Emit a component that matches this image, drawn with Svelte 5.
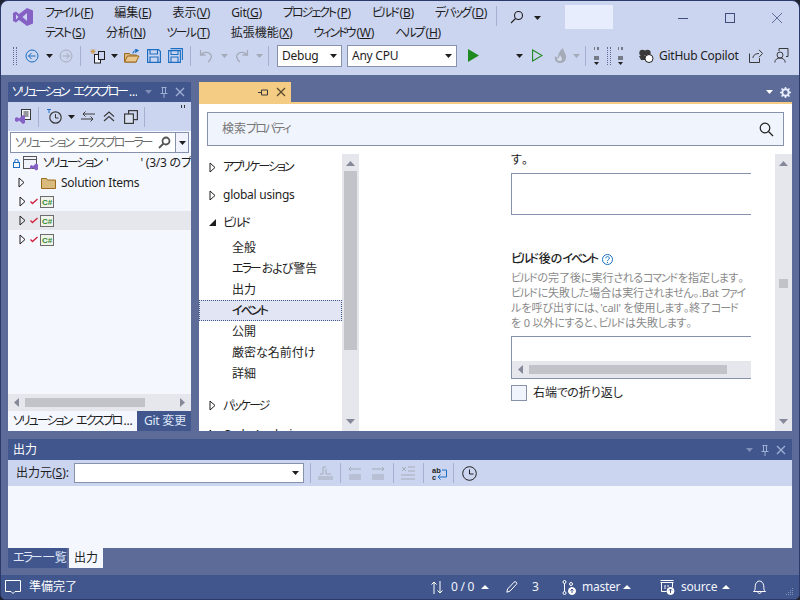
<script>
  const menu1 = [['ファイル','F'],['編集','E'],['表示','V'],['Git','G'],['プロジェクト','P'],['ビルド','B'],['デバッグ','D']];
  const menu2 = [['テスト','S'],['分析','N'],['ツール','T'],['拡張機能','X'],['ウィンドウ','W'],['ヘルプ','H']];
  const nav = [
    { t:'アプリケーション', c:'group closed' },
    { t:'global usings', c:'group closed' },
    { t:'ビルド', c:'group open' },
    { t:'全般', c:'sub' },
    { t:'エラーおよび警告', c:'sub' },
    { t:'出力', c:'sub' },
    { t:'イベント', c:'sub selected' },
    { t:'公開', c:'sub' },
    { t:'厳密な名前付け', c:'sub' },
    { t:'詳細', c:'sub' },
    { t:'パッケージ', c:'group closed gap' },
    { t:'Code Analysis', c:'group closed' }
  ];
  function segs(text) {
    return text.split(/([\u30A0-\u30FF]+|[\u3040-\u309F]+|[\x20-\x7E]+)/).filter(Boolean).map((t) => {
      const code = t.charCodeAt(0);
      let c = 'o';
      if (code >= 0x30A0 && code <= 0x30FF) c = 'k';
      else if (code >= 0x3040 && code <= 0x309F) c = 'h';
      else if (code < 0x7F) c = 'l';
      return { t, c };
    });
  }
</script>

{#snippet jp(text)}{#each segs(text) as s}<span class={s.c}>{s.t}</span>{/each}{/snippet}
{#snippet pin(c)}
  <svg class="glyph" width="10" height="12" viewBox="0 0 10 12" fill="none" stroke={c}><path d="M2.5 1.5h5M3.5 1.5v5.5M6.5 1.5v5.5M1.5 7.5h7M5 8v4"/></svg>
{/snippet}
{#snippet close(c)}
  <svg class="glyph" width="10" height="10" viewBox="0 0 10 10" fill="none" stroke={c} stroke-width="1.3"><path d="M1 1l8 8M9 1l-8 8"/></svg>
{/snippet}
{#snippet caret(c)}
  <svg class="glyph" width="7" height="4" viewBox="0 0 7 4"><path d="M0 0h7L3.5 4z" fill={c}/></svg>
{/snippet}
{#snippet upcaret()}
  <svg class="st-up" width="8" height="4" viewBox="0 0 8 4"><path d="M0 4h8L4 0z" fill="#fff"/></svg>
{/snippet}
{#snippet expander()}
  <svg class="glyph" width="7" height="11" viewBox="0 0 7 11" fill="none" stroke="#1e1e1e"><path d="M1 1l5 4.5-5 4.5z"/></svg>
{/snippet}
{#snippet cs()}
  <svg class="glyph" width="14" height="12" viewBox="0 0 14 12"><rect x=".5" y=".5" width="13" height="11" fill="#f0f3ea" stroke="#6d6d6d"/><text x="2" y="9" font-size="8" font-weight="700" fill="#2d8a2d" font-family="Liberation Sans, sans-serif">C#</text></svg>
{/snippet}
{#snippet check()}
  <svg class="glyph" width="8" height="7" viewBox="0 0 8 7" fill="none" stroke="#d0243c" stroke-width="1.4"><path d="M.5 3.500l2 2 5-4.500"/></svg>
{/snippet}

<div class="window">
  <header class="chrome">
    <div class="titlebar">
      <svg class="logo" width="20" height="18" viewBox="0 0 20 18"><path d="M0 5l3-1.500 3 2.500L14 0l6 2.500v13L14 18l-8-6-3 2.500L0 13zM3 6.500v5L5.500 9zM14 5l-4.500 4 4.500 4z" fill="#8661c5" fill-rule="evenodd"/></svg>
      <nav class="menus">
        <div class="menurow">
          {#each menu1 as m}<span>{@render jp(m[0])}<span class="l">(<u>{m[1]}</u>)</span></span>{/each}
        </div>
        <div class="menurow">
          {#each menu2 as m}<span>{@render jp(m[0])}<span class="l">(<u>{m[1]}</u>)</span></span>{/each}
        </div>
      </nav>
      <div class="titlesep"></div>
      <svg class="searchicon" width="14" height="14" viewBox="0 0 14 14" fill="none" stroke="#1e1e1e" stroke-width="1.1"><circle cx="8.500" cy="5.500" r="4"/><path d="M5.500 8.500L1 13"/></svg>
      <span class="searchcaret">{@render caret('#1e1e1e')}</span>
      <div class="titlebox"></div>
      <div class="winbtns">
        <svg width="12" height="12" viewBox="0 0 12 12"><path d="M1 6.500h10" stroke="#3f4f7a"/></svg>
        <svg width="12" height="12" viewBox="0 0 12 12" fill="none"><rect x="1.500" y="1.500" width="9" height="9" stroke="#3f4f7a"/></svg>
        <svg width="12" height="12" viewBox="0 0 12 12" fill="none" stroke="#5d6b99"><path d="M1 1l10 10M11 1L1 11"/></svg>
      </div>
    </div>
    <div class="toolbar">
      <div class="gripper"></div>
      <svg class="t-back" width="14" height="14" viewBox="0 0 14 14" fill="none" stroke="#1b6ec2"><circle cx="7" cy="7" r="6"/><path d="M10.500 7h-7M6.500 4l-3 3 3 3"/></svg>
      <span class="t-c1">{@render caret('#1e1e1e')}</span>
      <svg class="t-fwd" width="14" height="14" viewBox="0 0 14 14" fill="none" stroke="#a5aab8"><circle cx="7" cy="7" r="6"/><path d="M3.500 7h7M7.500 4l3 3-3 3"/></svg>
      <div class="sep s1"></div>
      <svg class="t-new" width="16" height="16" viewBox="0 0 16 16" fill="none"><path d="M3 1v5M.5 3.500h5M1 1.500l4 4M5 1.500l-4 4" stroke="#c9974c"/><rect x="4.500" y="6.500" width="6" height="8.500" stroke="#1e1e1e" fill="#f0f3fa"/><rect x="8.500" y="3.500" width="6" height="8" stroke="#1e1e1e" fill="#ccd5f0"/></svg>
      <span class="t-c2">{@render caret('#1e1e1e')}</span>
      <svg class="t-open" width="16" height="14" viewBox="0 0 16 14"><path d="M.5 4.500h5l1 1.500h6v7H.5z" fill="#dcb67a" stroke="#9a6a1f"/><path d="M.5 13l3-6h11.500l-3 6z" fill="#e8c68e" stroke="#9a6a1f"/><path d="M9 4.500c0-2 2-3 4-3M11 0l3 1.500-3 2" fill="none" stroke="#1b6ec2" stroke-width="1.200"/></svg>
      <svg class="t-save" width="14" height="14" viewBox="0 0 14 14" fill="none" stroke="#1b6ec2" stroke-width="1.200"><path d="M.6.6h11l1.800 1.800v11H.6z"/><path d="M3 1v4h7.500V1M3 13.400V8h8v5.400"/></svg>
      <svg class="t-saveall" width="15" height="15" viewBox="0 0 15 15" fill="none" stroke="#1b6ec2" stroke-width="1.100"><path d="M2.500.6h11.900v11.500M.6 2.600h11.800v11.800H.6z"/><path d="M3 3v3.500h7V3M3 14V9h7v5"/></svg>
      <div class="sep s2"></div>
      <svg class="t-undo" width="14" height="14" viewBox="0 0 14 14" fill="none" stroke="#a5aab8" stroke-width="1.300"><path d="M1.500 1v5h5M1.500 6C4 2.500 10 2.500 12 6c1 2.500-.5 5-3 7"/></svg>
      <span class="t-c3">{@render caret('#a5aab8')}</span>
      <svg class="t-redo" width="14" height="14" viewBox="0 0 14 14" fill="none" stroke="#a5aab8" stroke-width="1.300"><path d="M12.500 1v5h-5M12.500 6C10 2.500 4 2.500 2 6c-1 2.500.5 5 3 7"/></svg>
      <span class="t-c4">{@render caret('#a5aab8')}</span>
      <div class="sep s3"></div>
      <div class="combo debug"><span class="l">Debug</span>{@render caret('#1e1e1e')}</div>
      <div class="combo cpu"><span class="l">Any CPU</span>{@render caret('#1e1e1e')}</div>
      <svg class="t-play" width="11" height="13" viewBox="0 0 11 13"><path d="M0 0l11 6.500L0 13z" fill="#1f8a1f"/></svg>
      <span class="t-c5">{@render caret('#1e1e1e')}</span>
      <svg class="t-play2" width="11" height="13" viewBox="0 0 11 13" fill="none" stroke="#1f8a1f" stroke-width="1.100"><path d="M.6 1l9.500 5.500L.6 12z"/></svg>
      <svg class="t-flame" width="14" height="16" viewBox="0 0 14 16"><path d="M9 0C9 3 12 5 12 9c0 4-3 6-6 6S0 13 1 8c1 1 2 2 3 1C4 6 6 2 9 0z" fill="#a5aab8"/><path d="M6 13c-2 0-3-1-3-3 1 1 2 0 3-3 1 2 2 3 2 4s-1 2-2 2z" fill="#d6dbeb"/></svg>
      <span class="t-c6">{@render caret('#a5aab8')}</span>
      <div class="sep s4"></div>
      <svg class="t-step" width="5" height="18" viewBox="0 0 5 18"><path d="M0 0v3M4 0v3M0 10h5M0 12h5" stroke="#1e1e1e" fill="none"/><path d="M0 15h5l-2.500 3z" fill="#1e1e1e"/></svg>
      <div class="gripper g2"></div>
      <svg class="t-step2" width="5" height="18" viewBox="0 0 5 18"><path d="M0 0v3M4 0v3M0 10h5M0 12h5" stroke="#1e1e1e" fill="none"/><path d="M0 15h5l-2.500 3z" fill="#1e1e1e"/></svg>
      <svg class="t-copilot" width="16" height="14" viewBox="0 0 16 14"><circle cx="4.500" cy="4" r="3.200" fill="#3a3a3a"/><circle cx="9.500" cy="4" r="3.200" fill="#3a3a3a"/><path d="M1 7h11v4H3z" fill="#3a3a3a"/><circle cx="11" cy="9.500" r="4" fill="#fff" stroke="#1e1e1e"/></svg>
      <span class="copilot l">GitHub Copilot</span>
      <svg class="t-share" width="14" height="14" viewBox="0 0 14 14" fill="none" stroke="#3a3a3a"><path d="M.5 4.500v9h10V9M4 9c0-3 3-4.500 6-4.500M10 .8l3.500 3.700-3.500 3.700"/></svg>
      <svg class="t-fb" width="15" height="15" viewBox="0 0 15 15" fill="none" stroke="#3a3a3a"><path d="M5 3V.5h9v8h-2"/><circle cx="6" cy="7" r="3"/><path d="M.8 14.500c0-6 10.400-6 10.400 0"/></svg>
    </div>
  </header>

  <main class="workspace">
    <div class="upper">
      <aside class="explorer">
        <div class="panelhead">
          <span class="panelname">{@render jp('ソリューション エクスプロー...')}</span>
          <span class="hb">{@render caret('#7f8fb8')}</span>
          <span class="hb">{@render pin('#9fb0d6')}</span>
          <span class="hb">{@render close('#9fb0d6')}</span>
        </div>
        <div class="extools">
          <svg class="e-vs" width="16" height="15" viewBox="0 0 16 15"><rect x="6.500" y=".5" width="9" height="10" fill="#f0f3fa" stroke="#3a3a3a"/><path d="M8.500 3h5M8.500 5h5M8.500 7h5" stroke="#3a3a3a"/><path d="M0 9l2-1 2 1.500L8 6l2 1v7l-2 1-4-3.500L2 13l-2-1z" fill="#8661c5"/></svg>
          <div class="sep e1"></div>
          <svg class="e-clock" width="15" height="15" viewBox="0 0 15 15" fill="none"><path d="M0 0h4v1H2.500v3H1.500V1H0z" fill="#1b6ec2"/><circle cx="8.500" cy="8.500" r="5.700" stroke="#3a3a3a" stroke-width="1.200"/><path d="M8.500 5v4h3" stroke="#3a3a3a"/></svg>
          <span class="e-c">{@render caret('#1e1e1e')}</span>
          <svg class="e-sync" width="14" height="11" viewBox="0 0 14 11" fill="none" stroke="#3a3a3a"><path d="M14 3H2M4.500.5L2 3l2.500 2.500M0 8h12M9.500 5.500L12 8l-2.500 2.500"/></svg>
          <svg class="e-coll" width="12" height="11" viewBox="0 0 12 11" fill="none" stroke="#3a3a3a" stroke-width="1.100"><path d="M1 5.500L6 1l5 4.500M1 10l5-4.500L11 10"/></svg>
          <svg class="e-copy" width="14" height="14" viewBox="0 0 14 14" fill="none" stroke="#3a3a3a" stroke-width="1.200"><rect x="4.600" y=".6" width="8.800" height="9"/><rect x=".6" y="4" width="8.800" height="9.400" fill="#d8dfee"/></svg>
          <div class="sep e2"></div>
          <span class="overflowdots"><i></i><i></i></span>
        </div>
        <div class="exsearch">
          <span class="exsearchtext">{@render jp('ソリューション エクスプローラー (')}</span>
          <svg class="glyph" width="13" height="13" viewBox="0 0 13 13" fill="none" stroke="#555" stroke-width="1.800"><circle cx="8" cy="5" r="3.500"/><path d="M5.500 7.500L1 12"/></svg>
          <span class="exdrop">{@render caret('#1e1e1e')}</span>
        </div>
        <div class="tree">
          <div class="row root">
            <svg class="lock" width="7" height="9" viewBox="0 0 7 9" fill="none" stroke="#1b6ec2"><rect x=".5" y="3.500" width="6" height="5"/><path d="M1.800 3.500V2a1.700 1.700 0 0 1 3.400 0v1.500"/></svg>
            <svg class="glyph" width="17" height="15" viewBox="0 0 17 15"><rect x=".5" y=".5" width="13" height="12" fill="#f0f3fa" stroke="#555"/><path d="M1 3.500h12" stroke="#555"/><path d="M7 10l1.500-1 1.500 1 3-2.500 2 1v5l-2 1-3-2.500-1.500 1L7 13z" fill="#8661c5"/></svg>
            <span class="rootname">{@render jp("ソリューション '")}<span class="blank"></span>{@render jp("' (3/3 のプ")}</span>
          </div>
          <div class="row items"><span class="exp">{@render expander()}</span>
            <svg class="folder" width="15" height="12" viewBox="0 0 15 12"><path d="M.5 1.500h5l1 1.500h8v8.500H.5z" fill="#d9bb7d" stroke="#9a6a1f"/></svg>
            <span class="label l">Solution Items</span></div>
          <div class="row proj"><span class="exp">{@render expander()}</span>{@render check()}{@render cs()}</div>
          <div class="row proj hl"><span class="exp">{@render expander()}</span>{@render check()}{@render cs()}</div>
          <div class="row proj"><span class="exp">{@render expander()}</span>{@render check()}{@render cs()}</div>
        </div>
        <div class="hscroll">
          <svg width="5" height="9" viewBox="0 0 5 9"><path d="M5 0v9L0 4.500z" fill="#868999"/></svg>
          <div class="hthumb ex"></div>
          <svg width="5" height="9" viewBox="0 0 5 9"><path d="M0 0v9l5-4.500z" fill="#868999"/></svg>
        </div>
        <div class="extabs">
          <div class="tab on"><span>{@render jp('ソリューション エクスプロ...')}</span></div>
          <div class="tab off"><span>{@render jp('Git ')}変更</span></div>
        </div>
      </aside>

      <section class="document">
        <div class="docstrip">
          <div class="doctab">
            <svg class="pinh" width="10" height="9" viewBox="0 0 10 9" fill="none" stroke="#3a3a3a"><path d="M0 4.500h3M3.500 2v5h6M3.500 2h6v5" /></svg>
            {@render close('#5a4a2a')}
          </div>
          <div class="stripright">
            {@render caret('#ffffff')}
            <svg class="glyph" width="11" height="11" viewBox="0 0 11 11"><circle cx="5.500" cy="5.500" r="3.200" fill="none" stroke="#e8edfb" stroke-width="2"/><path d="M5.500 0v2M5.500 9v2M0 5.500h2M9 5.500h2M1.500 1.500l1.400 1.400M8.100 8.100l1.400 1.400M1.500 9.500l1.400-1.400M8.100 2.900l1.400-1.400" stroke="#e8edfb" stroke-width="1.500"/></svg>
          </div>
        </div>
        <div class="docbar"></div>
        <div class="docbody">
          <div class="propsearch">
            <span>{@render jp('検索プロパティ')}</span>
            <svg class="glyph" width="15" height="15" viewBox="0 0 15 15" fill="none" stroke="#1e1e1e" stroke-width="1.200"><circle cx="6" cy="6" r="4.800"/><path d="M9.500 9.500L14 14"/></svg>
          </div>
          <div class="propbody">
            <ul class="navlist">
              {#each nav as n}
                <li class={n.c}>
                  {#if n.c.includes('closed')}<span class="navexp">{@render expander()}</span>{/if}
                  {#if n.c.includes('open')}<svg class="navopen" width="7" height="7" viewBox="0 0 7 7"><path d="M7 0v7H0z" fill="#1e1e1e"/></svg>{/if}
                  <span class="label">{@render jp(n.t)}</span>
                </li>
              {/each}
            </ul>
            <div class="vscroll nav">
              <svg width="9" height="5" viewBox="0 0 9 5"><path d="M0 5h9L4.500 0z" fill="#868999"/></svg>
              <div class="vtrack"><div class="vthumb navthumb"></div></div>
              <svg width="9" height="5" viewBox="0 0 9 5"><path d="M0 0h9L4.500 5z" fill="#868999"/></svg>
            </div>
            <div class="pane">
              <div class="clip">
                <p class="dark top">{@render jp('す。')}</p>
                <div class="field plain"></div>
                <h3><span>{@render jp('ビルド後のイベント')}</span> <svg class="help" width="11" height="11" viewBox="0 0 11 11" fill="none" stroke="#1b6ec2"><circle cx="5.500" cy="5.500" r="5"/><path d="M3.800 4.300c0-2.300 3.500-2.300 3.500 0 0 1.400-1.800 1.300-1.800 2.700M5.500 8v1"/></svg></h3>
                <p class="desc">{@render jp('ビルドの完了後に実行されるコマンドを指定します。')}<br/>{@render jp('ビルドに失敗した場合は実行されません。.Bat ファイ')}<br/>{@render jp("ルを呼び出すには、'call' を使用します。終了コード")}<br/>{@render jp('を 0 以外にすると、ビルドは失敗します。')}</p>
                <div class="field withbar">
                  <div class="fieldbar">
                    <svg width="5" height="9" viewBox="0 0 5 9"><path d="M5 0v9L0 4.500z" fill="#868999"/></svg>
                    <div class="hthumb fld"></div>
                  </div>
                </div>
                <label class="cb"><span class="box"></span><span>{@render jp('右端での折り返し')}</span></label>
              </div>
            </div>
            <div class="vscroll main">
              <svg width="9" height="5" viewBox="0 0 9 5"><path d="M0 5h9L4.500 0z" fill="#868999"/></svg>
              <div class="vtrack"><div class="vthumb mainthumb"></div></div>
              <svg width="9" height="5" viewBox="0 0 9 5"><path d="M0 0h9L4.500 5z" fill="#868999"/></svg>
            </div>
          </div>
        </div>
      </section>
    </div>

    <section class="output">
      <div class="panelhead out">
        <span class="panelname">出力</span>
        <span class="hb">{@render caret('#7f8fb8')}</span>
        <span class="hb">{@render pin('#9fb0d6')}</span>
        <span class="hb">{@render close('#9fb0d6')}</span>
      </div>
      <div class="outtools">
        <span class="outlabel">出力元(<u>S</u>):</span>
        <div class="combo source">{@render caret('#1e1e1e')}</div>
        <div class="sep o1"></div>
        <svg class="o-a" width="15" height="14" viewBox="0 0 15 14" fill="none" stroke="#a5aab8"><path d="M0 11h15M0 13h15M5 8V1h3M5 8H2M8 3v5h5"/></svg>
        <div class="sep o2"></div>
        <svg class="o-b" width="14" height="14" viewBox="0 0 14 14" fill="none" stroke="#a5aab8"><path d="M3 1L1 3l2 2M1 3h12M1 9h12M1 11h12M1 13h12"/></svg>
        <svg class="o-c" width="14" height="14" viewBox="0 0 14 14" fill="none" stroke="#a5aab8"><path d="M11 1l2 2-2 2M13 3H1M1 9h12M1 11h12M1 13h12"/></svg>
        <div class="sep o3"></div>
        <svg class="o-d" width="15" height="14" viewBox="0 0 15 14" fill="none" stroke="#a5aab8"><path d="M1 1l4 4M5 1L1 5M7 1h7M7 5h7M0 9h14M0 13h14"/></svg>
        <div class="sep o4"></div>
        <svg class="o-e" width="15" height="15" viewBox="0 0 15 15" fill="none"><text x="0" y="6.500" font-size="7.500" font-weight="700" fill="#1e1e1e" font-family="Liberation Sans, sans-serif">ab</text><text x="0" y="14" font-size="7.500" font-weight="700" fill="#1e1e1e" font-family="Liberation Sans, sans-serif">c</text><path d="M10 4h4.500v7H6M8.500 8.500L6 11l2.500 2.500" stroke="#1b6ec2"/></svg>
        <div class="sep o5"></div>
        <svg class="o-f" width="15" height="15" viewBox="0 0 15 15" fill="none" stroke="#1e1e1e"><circle cx="7.500" cy="7.500" r="6.800"/><path d="M7.500 3.500v4.500h4"/></svg>
      </div>
      <div class="outbody"></div>
    </section>
    <div class="outtabs">
      <div class="tab off"><span>{@render jp('エラー一覧')}</span></div>
      <div class="tab on"><span>出力</span></div>
    </div>
  </main>

  <footer class="status">
    <svg class="bubble" width="16" height="16" viewBox="0 0 16 16" fill="none" stroke="#fff"><path d="M.5 1.500h15v11H10l-2 2-2-2H.5z"/></svg>
    <span class="ready">準備完了</span>
    <svg class="st-sync" width="12" height="13" viewBox="0 0 12 13" fill="none" stroke="#fff"><path d="M3 13V1M.5 3.500L3 1l2.500 2.500M9 0v12M6.500 9.500L9 12l2.500-2.500"/></svg>
    <span class="st-t zero l">0 / 0</span>
    <span class="u1">{@render upcaret()}</span>
    <svg class="st-pen" width="12" height="12" viewBox="0 0 12 12" fill="none" stroke="#fff"><path d="M.8 11.200l.8-3.200 6.400-6.800a1.500 1.500 0 0 1 2.300 2.200L3.900 10.200z"/></svg>
    <span class="st-t three l">3</span>
    <svg class="st-branch" width="14" height="15" viewBox="0 0 14 15" fill="none" stroke="#fff"><circle cx="2.500" cy="2" r="1.500"/><circle cx="2.500" cy="13" r="1.500"/><path d="M2.500 3.500v8"/><circle cx="9" cy="4" r="1.500"/><circle cx="10" cy="11" r="3.500" fill="#fff"/><path d="M10 13V9M8.500 10.500L10 9l1.500 1.500" stroke="#40568d"/></svg>
    <span class="st-t master l">master</span>
    <span class="u2">{@render upcaret()}</span>
    <svg class="st-repo" width="15" height="15" viewBox="0 0 15 15" fill="none" stroke="#fff"><path d="M.5.500h13M.5 2.500h13M1.500 2.500v9h5M12.500 2.500v5M5 5v4M8 5v2"/><circle cx="10.500" cy="11" r="3.500" fill="#fff"/><path d="M10.500 13V9M9 10.500L10.500 9l1.500 1.500" stroke="#40568d"/></svg>
    <span class="st-t src l">source</span>
    <span class="u3">{@render upcaret()}</span>
    <svg class="st-bell" width="13" height="14" viewBox="0 0 13 14" fill="none" stroke="#fff"><path d="M.5 11.500c2-1 1.500-3 1.800-6C2.600 3 4.500 1 6.500 1s3.900 2 4.200 4.500c.3 3-.2 5 1.800 6zM5 12c0 2 3 2 3 0"/></svg>
    <svg class="st-grip" width="8" height="8" viewBox="0 0 8 8" fill="#8090b8"><path d="M6 0h1v1H6zM4 2h1v1H4zM6 2h1v1H6zM2 4h1v1H2zM4 4h1v1H4zM6 4h1v1H6zM0 6h1v1H0zM2 6h1v1H2zM4 6h1v1H4zM6 6h1v1H6z"/></svg>
  </footer>
</div>

<style>
  :global(body) { background: #20232f; overflow: hidden; }
  .window {
    width: 800px; height: 600px; box-sizing: border-box; overflow: hidden;
    border-radius: 8px 8px 6px 6px; border: 1px solid #2b3a6b;
    background: #5d6b99; display: flex; flex-direction: column;
    font: 12px/16px "Noto Sans", "Noto Sans CJK JP", sans-serif;
    font-feature-settings: "palt"; color: #1e1e1e;
  }
  .window :global(svg) { display: block; flex: none; }
  .k { letter-spacing: -2px; margin-right: 2px; }
  .h { letter-spacing: -1px; margin-right: 1px; }
  .l { letter-spacing: -.25px; }
  .o { letter-spacing: 0; }
  u { text-underline-offset: 1px; }
  .glyph { flex: none; }
  .chrome { background: #ccd5f0; height: 74px; flex: none; }
  .titlebar { height: 43px; display: flex; align-items: flex-start; }
  .logo { margin: 7px 0 0 12px; }
  .menus { margin-left: 12px; width: 451px; }
  .menurow { height: 20px; display: flex; gap: 21px; align-items: center; white-space: nowrap; }
  .menurow:first-child { margin-top: 2px; }
  .titlesep { width: 1px; height: 20px; background: #a5b1d0; margin: 5px 0 0 0; }
  .searchicon { margin: 9px 0 0 13px; }
  .searchcaret { margin: 15px 0 0 10px; }
  .titlebox { width: 48px; height: 24px; background: #e8edfd; margin: 4px 0 0 24px; }
  .winbtns { margin: 11px 0 0 64px; display: flex; gap: 35px; }
  .toolbar { height: 31px; display: flex; align-items: center; padding-bottom: 8px; box-sizing: border-box; }
  .gripper { width: 2px; height: 18px; margin-left: 12px; flex: none; border-left: 1px dotted #5d6b99; border-right: 1px dotted #5d6b99; }
  .sep { width: 1px; height: 20px; background: #a5b1d0; flex: none; }
  .t-back { margin-left: 8px; } .t-c1 { margin-left: 7px; } .t-fwd { margin-left: 6px; } .s1 { margin-left: 7px; }
  .t-new { margin-left: 9px; } .t-c2 { margin-left: 5px; } .t-open { margin-left: 6px; } .t-save { margin-left: 7px; }
  .t-saveall { margin-left: 7px; } .s2 { margin-left: 7px; } .t-undo { margin-left: 8px; } .t-c3 { margin-left: 8px; }
  .t-redo { margin-left: 7px; } .t-c4 { margin-left: 7px; } .s3 { margin-left: 5px; }
  .combo { height: 22px; box-sizing: border-box; background: #fff; border: 1px solid #8691ac; display: flex; align-items: center; justify-content: space-between; padding: 0 4px; flex: none; }
  .debug { width: 65px; margin-left: 8px; }
  .cpu { width: 110px; margin-left: 5px; }
  .t-play { margin-left: 11px; } .t-c5 { margin-left: 37px; } .t-play2 { margin-left: 9px; } .t-flame { margin-left: 11px; }
  .t-c6 { margin-left: 5px; } .s4 { margin-left: 5px; } .t-step { margin-left: 8px; } .g2 { margin-left: 8px; }
  .t-step2 { margin-left: 7px; } .t-copilot { margin-left: 15px; } .copilot { margin-left: 5px; white-space: nowrap; width: 80px; flex: none; }
  .t-share { margin-left: 10px; } .t-fb { margin-left: 11px; }

  .workspace { flex: 1; min-height: 0; display: flex; flex-direction: column; padding: 7px 7px 0; }
  .upper { height: 349px; display: flex; gap: 8px; flex: none; }
  .explorer { width: 183px; flex: none; display: flex; flex-direction: column; background: #f5f7fe; }
  .panelhead { height: 20px; background: #40568d; color: #fff; display: flex; align-items: center; padding: 0 6px 0 4px; gap: 6px; flex: none; }
  .panelname { flex: 1; min-width: 0; white-space: nowrap; overflow: hidden; }
  .panelname .k { letter-spacing: -2.3px; margin-right: 2.3px; }
  .hb { width: 10px; display: flex; justify-content: center; }
  .extools { height: 29px; background: #ccd5f0; display: flex; align-items: center; flex: none; }
  .e-vs { margin-left: 7px; } .e1 { margin-left: 7px; } .e-clock { margin-left: 8px; } .e-c { margin-left: 6px; }
  .e-sync { margin-left: 6px; } .e-coll { margin-left: 8px; } .e-copy { margin-left: 9px; } .e2 { margin-left: 6px; }
  .overflowdots { display: flex; gap: 2px; margin: -20px 0 0 36px; }
  .overflowdots i { width: 1px; height: 3px; background: #333; }
  .exsearch { height: 21px; box-sizing: border-box; margin: 1px 2px 0; border: 1px solid #8691ac; background: #fff; display: flex; align-items: center; padding-left: 4px; gap: 4px; flex: none; }
  .exsearchtext { flex: 1; min-width: 0; color: #6d6d6d; white-space: nowrap; overflow: hidden; }
  .exdrop { width: 12px; height: 100%; border-left: 1px solid #8691ac; background: #f0f3fd; display: flex; align-items: center; justify-content: center; flex: none; }
  .tree { flex: 1; min-height: 0; overflow: hidden; }
  .row { height: 19px; display: flex; align-items: center; white-space: nowrap; overflow: hidden; }
  .row.root { height: 20px; padding-left: 5px; gap: 3px; }
  .blank { display: inline-block; width: 32px; }
  .exp { margin-left: 10px; width: 12px; flex: none; }
  .folder { margin: 0 0 0 11px; }
  .items .label { margin-left: 5px; }
  .proj .exp { width: 11px; }
  .proj { gap: 1px; }
  .proj :global(svg:last-child) { margin-left: 1px; }
  .hl { background: #e6e7ed; }
  .hscroll { height: 17px; background: #e6e7ed; display: flex; align-items: center; padding: 0 6px; justify-content: space-between; flex: none; }
  .hthumb { height: 9px; background: #c2c3c9; }
  .hthumb.ex { width: 120px; margin-right: auto; margin-left: 6px; }
  .extabs { height: 20px; display: flex; flex: none; background: #5d6b99; }
  .tab { height: 20px; display: flex; align-items: center; padding: 0 5px; white-space: nowrap; box-sizing: border-box; overflow: hidden; }
  .tab.on { background: #f5f7fe; color: #1e1e1e; }
  .tab.off { background: #40568d; color: #dfe6f8; }
  .extabs .tab.on { flex: 0 0 129px; }
  .extabs .tab.off { flex: 1; min-width: 0; padding-left: 7px; }

  .document { flex: 1; min-width: 0; display: flex; flex-direction: column; }
  .docstrip { height: 20px; display: flex; flex: none; }
  .doctab { width: 92px; background: #f5cc84; display: flex; align-items: center; justify-content: flex-end; gap: 8px; padding-right: 5px; box-sizing: border-box; }
  .stripright { flex: 1; display: flex; align-items: center; justify-content: flex-end; gap: 7px; padding-right: 1px; }
  .docbar { height: 2px; background: #f5cc84; flex: none; }
  .docbody { flex: 1; min-height: 0; background: #fff; display: flex; flex-direction: column; }
  .propsearch { height: 34px; box-sizing: border-box; margin: 8px; background: #f0f4fd; border: 1px solid #8691ac; display: flex; align-items: center; justify-content: space-between; padding: 0 9px 0 14px; color: #767676; flex: none; }
  .propbody { flex: 1; min-height: 0; display: flex; overflow: hidden; }
  .navlist { width: 143px; list-style: none; margin: 0; padding: 0; flex: none; overflow: hidden; }
  .navlist li { height: 21px; display: flex; align-items: center; box-sizing: border-box; white-space: nowrap; }
  .navlist .group { padding-left: 10px; height: 29px; }
  .navlist .group:first-child { height: 26px; }
  .navlist .group:nth-child(2) { height: 30px; }
  .navlist .group .label { margin-left: 7px; }
  .navlist .open { height: 27px; padding-bottom: 2px; }
  .navlist .gap { margin-top: 7px; }
  .navexp { flex: none; }
  .navopen { flex: none; }
  .navlist .sub { padding-left: 33px; }
  .navlist .selected { background: #e2e5f4; border: 1px dotted #40568d; padding-left: 32px; font-weight: 500; }
  .vscroll { width: 17px; flex: none; background: #e6e7ed; display: flex; flex-direction: column; align-items: center; padding: 7px 0; box-sizing: border-box; }
  .vtrack { flex: 1; align-self: stretch; min-height: 0; }
  .vthumb { background: #c2c3c9; margin: 0 auto; width: 13px; }
  .navthumb { height: 179px; margin-top: 5px; }
  .mainthumb { height: 9px; margin-top: 113px; width: 9px; }
  .pane { flex: 1; min-width: 0; padding-left: 152px; display: flex; }
  .clip { width: 240px; overflow: hidden; }
  p { margin: 0; }
  .top { line-height: 14px; margin-top: -1px; }
  .field { box-sizing: border-box; height: 43px; width: 260px; border: 1px solid #8691ac; background: #fff; }
  .plain { margin-top: 6px; height: 42px; }
  h3 { font-size: 12px; font-weight: 500; line-height: 16px; margin: 36px 0 0; display: flex; align-items: center; gap: 3px; white-space: nowrap; }
  .desc { color: #8a8a8a; font-size: 11px; line-height: 15px; margin-top: 3px; white-space: nowrap; }
  .desc .o { letter-spacing: -.1px; margin-right: .1px; }
  .desc .h { letter-spacing: -.5px; margin-right: .5px; }
  .desc .k { letter-spacing: -1.3px; margin-right: 1.3px; }
  .withbar { margin-top: 6px; display: flex; flex-direction: column; justify-content: flex-end; }
  .fieldbar { height: 17px; background: #e6e7ed; display: flex; align-items: center; padding-left: 6px; }
  .hthumb.fld { width: 198px; margin-left: 6px; }
  .cb { display: flex; align-items: center; gap: 6px; margin-top: 6px; white-space: nowrap; }
  .box { width: 16px; height: 16px; box-sizing: border-box; border: 1px solid #8691ac; background: #f0f4fd; }

  .output { margin-top: 8px; flex: none; display: flex; flex-direction: column; }
  .panelhead.out { height: 21px; padding-left: 5px; }
  .outtools { height: 26px; background: #ccd5f0; display: flex; align-items: center; }
  .outlabel { margin-left: 8px; white-space: nowrap; width: 58px; flex: none; }
  .source { width: 230px; height: 20px; justify-content: flex-end; }
  .o1 { margin-left: 6px; } .o-a { margin-left: 7px; } .o2 { margin-left: 7px; } .o-b { margin-left: 7px; } .o-c { margin-left: 9px; }
  .o3 { margin-left: 8px; } .o-d { margin-left: 7px; } .o4 { margin-left: 7px; } .o-e { margin-left: 8px; } .o5 { margin-left: 6px; } .o-f { margin-left: 8px; }
  .outbody { height: 62px; background: #f5f7fe; }
  .outtabs { display: flex; height: 20px; flex: none; }
  .outtabs .tab.off { width: 59px; padding-left: 5px; flex: none; }
  .outtabs .tab.on { margin-left: 2px; width: 34px; justify-content: center; padding: 0; flex: none; }

  .status { height: 24px; background: #40568d; color: #fff; display: flex; align-items: center; flex: none; }
  .bubble { margin-left: 4px; }
  .ready { margin-left: 8px; width: 48px; white-space: nowrap; flex: none; }
  .st-t { white-space: nowrap; flex: none; color: #f2f4fb; }
  .st-up { flex: none; }
  .st-sync { margin-left: 354px; }
  .zero { margin-left: 8px; width: 24px; } .u1 { margin-left: 6px; }
  .st-pen { margin-left: 17px; } .three { margin-left: 14px; width: 7px; }
  .st-branch { margin-left: 23px; } .master { margin-left: 6px; width: 36px; } .u2 { margin-left: 5px; }
  .st-repo { margin-left: 29px; } .src { margin-left: 6px; width: 35px; } .u3 { margin-left: 6px; }
  .st-bell { margin-left: 23px; } .st-grip { margin: 10px 0 0 20px; }
</style>
